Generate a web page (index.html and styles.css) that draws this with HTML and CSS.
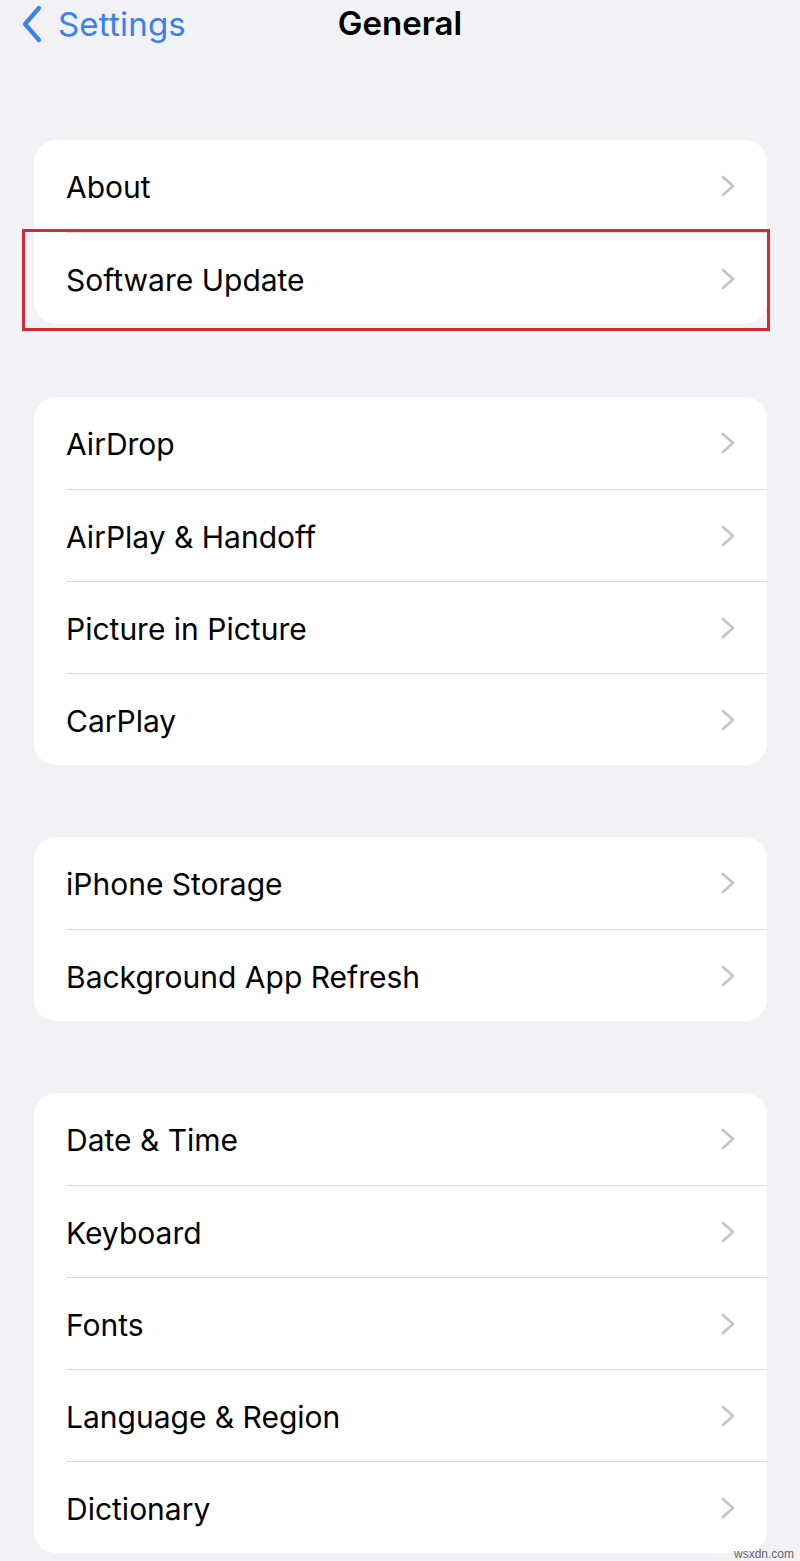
FILE: index.html
```html
<!DOCTYPE html>
<html lang="en">
<head>
    <meta charset="UTF-8">
    <meta name="viewport" content="width=device-width, initial-scale=1.0">
    <title>General</title>
    <link rel="stylesheet" href="styles.css">
</head>
<body>

    <div class="navbar">
        <a class="back" href="#">
            <svg class="back-icon" viewBox="0 0 24 38" width="24" height="38">
                <path d="M19 3 L5 19 L19 35" fill="none" stroke="currentColor" stroke-width="4.2" stroke-linecap="round" stroke-linejoin="round"/>
            </svg>
            <span>Settings</span>
        </a>
        <div class="title">General</div>
    </div>

    <div class="group first">
        <div class="row"><span>About</span><svg class="chev" viewBox="0 0 14 22"><path d="M2 2 L12 11 L2 20"/></svg></div>
        <div class="row highlighted"><span>Software Update</span><svg class="chev" viewBox="0 0 14 22"><path d="M2 2 L12 11 L2 20"/></svg></div>
    </div>

    <div class="group second">
        <div class="row"><span>AirDrop</span><svg class="chev" viewBox="0 0 14 22"><path d="M2 2 L12 11 L2 20"/></svg></div>
        <div class="row"><span>AirPlay &amp; Handoff</span><svg class="chev" viewBox="0 0 14 22"><path d="M2 2 L12 11 L2 20"/></svg></div>
        <div class="row"><span>Picture in Picture</span><svg class="chev" viewBox="0 0 14 22"><path d="M2 2 L12 11 L2 20"/></svg></div>
        <div class="row"><span>CarPlay</span><svg class="chev" viewBox="0 0 14 22"><path d="M2 2 L12 11 L2 20"/></svg></div>
    </div>

    <div class="group">
        <div class="row"><span>iPhone Storage</span><svg class="chev" viewBox="0 0 14 22"><path d="M2 2 L12 11 L2 20"/></svg></div>
        <div class="row"><span>Background App Refresh</span><svg class="chev" viewBox="0 0 14 22"><path d="M2 2 L12 11 L2 20"/></svg></div>
    </div>

    <div class="group">
        <div class="row"><span>Date &amp; Time</span><svg class="chev" viewBox="0 0 14 22"><path d="M2 2 L12 11 L2 20"/></svg></div>
        <div class="row"><span>Keyboard</span><svg class="chev" viewBox="0 0 14 22"><path d="M2 2 L12 11 L2 20"/></svg></div>
        <div class="row"><span>Fonts</span><svg class="chev" viewBox="0 0 14 22"><path d="M2 2 L12 11 L2 20"/></svg></div>
        <div class="row"><span>Language &amp; Region</span><svg class="chev" viewBox="0 0 14 22"><path d="M2 2 L12 11 L2 20"/></svg></div>
        <div class="row"><span>Dictionary</span><svg class="chev" viewBox="0 0 14 22"><path d="M2 2 L12 11 L2 20"/></svg></div>
    </div>

    <div class="watermark">wsxdn.com</div>

</body>
</html>
```

FILE: styles.css
```css
body {
    font-family: Inter, "Noto Sans", Arial, sans-serif;
    background: #f1f1f6;
    margin: 0;
    padding: 0 33px 0 34px;
    position: relative;
    min-height: 1561px;
    box-sizing: border-box;
    color: #000;
}

.navbar {
    height: 48px;
    display: flex;
    align-items: center;
    justify-content: center;
    position: relative;
}

.back {
    position: absolute;
    left: -14px;
    top: 4px;
    display: flex;
    align-items: center;
    gap: 14px;
    color: #3a7ff0;
    text-decoration: none;
    font-size: 33px;
    letter-spacing: 0.2px;
}

.back-icon {
    display: block;
}

.title {
    font-size: 33px;
    font-weight: 600;
    margin-left: -1px;
    margin-top: -2px;
}

.group {
    background: #fff;
    border-radius: 22px;
    margin-top: 72px;
}

.group.first {
    margin-top: 92px;
}

.group.second {
    margin-top: 73px;
}

.row {
    position: relative;
    height: 92px;
    display: flex;
    align-items: center;
    justify-content: space-between;
    margin-left: 32px;
    padding-right: 32px;
    font-size: 30px;
    border-top: 1px solid #dcdce0;
    box-sizing: border-box;
}

.row span {
    margin-top: 2px;
}

.row:first-child {
    border-top: none;
}

.chev {
    width: 14px;
    height: 22px;
    fill: none;
    stroke: #c3c3c7;
    stroke-width: 2.6;
    stroke-linecap: round;
    stroke-linejoin: round;
}

.highlighted::after {
    content: "";
    position: absolute;
    top: -4px;
    left: -44px;
    right: -3px;
    bottom: -7px;
    border: 3px solid #d42a35;
}

.watermark {
    position: absolute;
    right: 6px;
    bottom: 0;
    font-size: 12px;
    color: #666;
    font-family: "Liberation Sans", Arial, sans-serif;
}
```
